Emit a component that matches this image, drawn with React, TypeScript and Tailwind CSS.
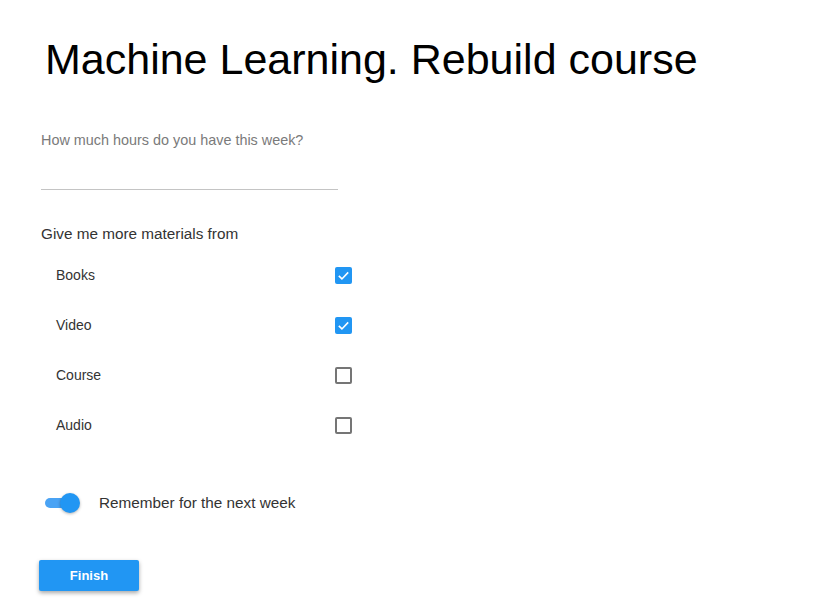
import React, { useState } from "react";

type Material = { label: string; checked: boolean };

const initial: Material[] = [
  { label: "Books", checked: true },
  { label: "Video", checked: true },
  { label: "Course", checked: false },
  { label: "Audio", checked: false },
];

function Checkbox({ checked, onChange }: { checked: boolean; onChange: () => void }) {
  return (
    <button
      type="button"
      onClick={onChange}
      className={`flex h-[17px] w-[17px] items-center justify-center rounded-[2px] ${
        checked ? "bg-[#2196f3]" : "border-2 border-[#757575] bg-white"
      }`}
      aria-checked={checked}
      role="checkbox"
    >
      {checked && (
        <svg viewBox="0 0 24 24" className="h-[15px] w-[15px]" fill="none" stroke="white" strokeWidth="2.6">
          <path d="M4.5 12.5l5 5L19.5 7" />
        </svg>
      )}
    </button>
  );
}

export default function App() {
  const [items, setItems] = useState(initial);
  const [remember, setRemember] = useState(true);

  function toggle(i: number) {
    setItems((prev) => prev.map((m, idx) => (idx === i ? { ...m, checked: !m.checked } : m)));
  }

  return (
    <div className="min-h-[616px] w-[822px] bg-white font-['Liberation_Sans',Arial,sans-serif]">
      <h1 className="pl-[45px] pt-[33px] text-[43px] leading-[52px] text-black">
        Machine Learning. Rebuild course
      </h1>

      <div className="mt-[47px] pl-[41px]">
        <div className="text-[14.4px] leading-4 text-[#7a7a7a]">How much hours do you have this week?</div>
        <input className="mt-[10px] block h-[32px] w-[297px] border-b border-[#c4c4c4] text-[14px] outline-none" />
      </div>

      <div className="mt-[36px] pl-[41px] text-[15.3px] leading-4 text-[#333]">Give me more materials from</div>

      <div className="mt-[8px] flex flex-col">
        {items.map((m, i) => (
          <div key={m.label} className="flex h-[50px] items-center pl-[56px]">
            <span className="w-[279px] text-[14px] text-[#333]">{m.label}</span>
            <Checkbox checked={m.checked} onChange={() => toggle(i)} />
          </div>
        ))}
      </div>

      <div className="mt-[43px] flex h-[20px] items-center pl-[45px]">
        <button
          type="button"
          onClick={() => setRemember((r) => !r)}
          className="relative h-[20px] w-[35px]"
          aria-pressed={remember}
        >
          <span className={`absolute left-0 top-[5px] h-[10px] w-[30px] rounded-full ${remember ? "bg-[#4aa3f4]" : "bg-[#bdbdbd]"}`} />
          <span
            className={`absolute top-0 h-[20px] w-[20px] rounded-full shadow-[0_1px_3px_rgba(0,0,0,0.3)] ${
              remember ? "left-[15px] bg-[#2196f3]" : "left-0 bg-[#fafafa]"
            }`}
          />
        </button>
        <span className="ml-[19px] text-[15.3px] text-[#333]">Remember for the next week</span>
      </div>

      <button
        type="button"
        className="ml-[39px] mt-[47px] flex h-[31px] w-[100px] items-center justify-center rounded-[2px] bg-[#2196f3] text-[13px] font-bold text-white shadow-[0_2px_4px_rgba(0,0,0,0.35)]"
      >
        Finish
      </button>
    </div>
  );
}
